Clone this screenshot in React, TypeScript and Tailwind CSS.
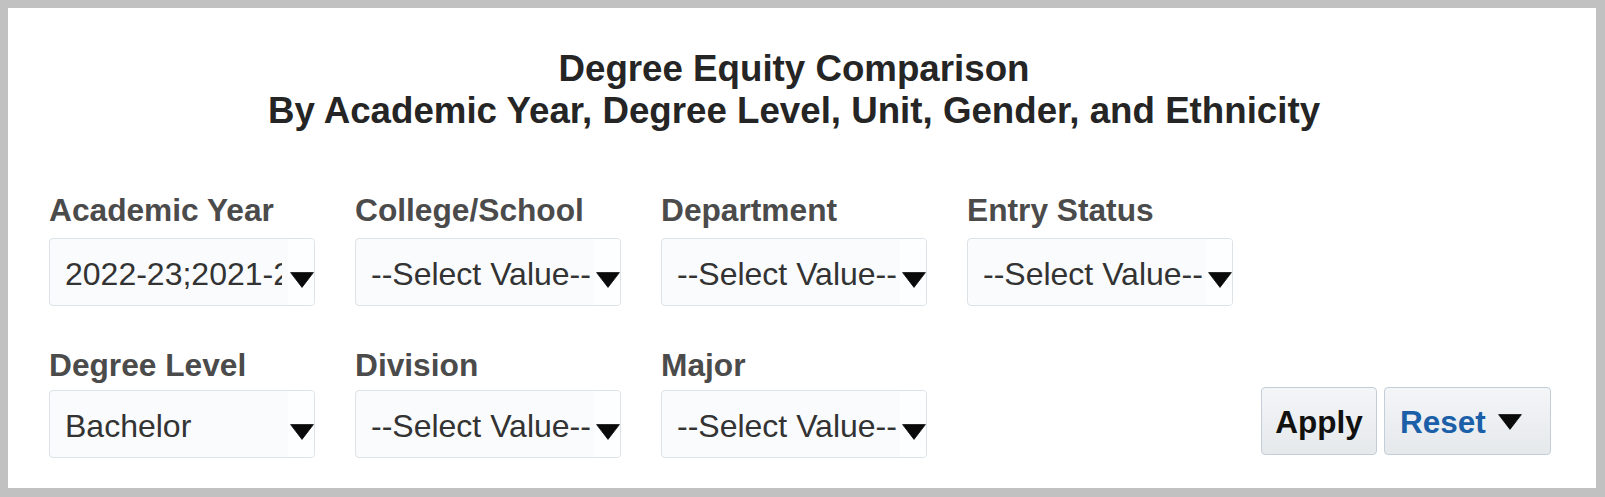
import React from 'react';

const font = { fontFamily: '"Liberation Sans", Arial, sans-serif' };

interface SelectFieldProps {
  label: string;
  value: string;
  labelGap?: string;
  clip?: string;
}

const DownArrow = ({ className }: { className?: string }) => (
  <svg width="24" height="16" viewBox="0 0 24 16" className={className}>
    <polygon points="0.6,0.6 23.4,0.6 12,15.4" fill="#0a0a0a" stroke="#0a0a0a" strokeWidth="0.8" strokeLinejoin="round" />
  </svg>
);

const SelectField = ({ label, value, labelGap = 'mt-[7px]', clip = 'w-[223px]' }: SelectFieldProps) => {
  return (
    <div className="flex w-[266px] flex-col">
      <div className="text-[31.7px] font-bold leading-[36px] whitespace-nowrap text-[#4b4b4b]">{label}</div>
      <div className={`${labelGap} flex h-[68px] items-center overflow-hidden rounded-[4px] border border-[#dce2e6] bg-[#f9fbfd]`}>
        <span className={`${clip} ml-[15px] shrink-0 overflow-hidden pt-[4px] text-[32px] leading-[36px] whitespace-nowrap text-[#333333]`}>
          {value}
        </span>
        <div className="ml-auto flex w-[26px] shrink-0 self-stretch items-end justify-end bg-[#fdfeff] pb-[17px]">
          <DownArrow />
        </div>
      </div>
    </div>
  );
};

export default function App() {
  return (
    <div
      className="h-[497px] w-[1605px] bg-[#c1c1c1] pt-[8px] pl-[8px] pr-[9px] pb-[9px]"
      style={font}
    >
      <div className="h-full bg-white pt-[40px] pl-[41px] pr-[45px]">
        {/* Title */}
        <div className="pr-[12px] text-center text-[36.7px] font-bold leading-[42px] text-[#252525]">
          <div>Degree Equity Comparison</div>
          <div>By Academic Year, Degree Level, Unit, Gender, and Ethnicity</div>
        </div>

        {/* Prompts row 1 */}
        <div className="mt-[60px] flex gap-[40px]">
          <SelectField label="Academic Year" value="2022-23;2021-22;2020-21" labelGap="mt-[10px]" clip="w-[217px]" />
          <SelectField label="College/School" value="--Select Value--" labelGap="mt-[10px]" />
          <SelectField label="Department" value="--Select Value--" labelGap="mt-[10px]" />
          <SelectField label="Entry Status" value="--Select Value--" labelGap="mt-[10px]" />
        </div>

        {/* Prompts row 2 + buttons */}
        <div className="mt-[41px] flex items-end gap-[40px]">
          <SelectField label="Degree Level" value="Bachelor" />
          <SelectField label="Division" value="--Select Value--" />
          <SelectField label="Major" value="--Select Value--" />
          <div className="ml-auto mb-[3px] flex gap-[7px]">
            <button className="flex h-[68px] w-[116px] items-center justify-center rounded-[4px] border border-[#c3ced8] bg-gradient-to-b from-[#f3f5f7] to-[#e6e9ec] pt-[4px] text-[31.5px] font-bold text-[#111111]">
              Apply
            </button>
            <button className="flex h-[68px] w-[167px] items-center rounded-[4px] border border-[#c3ced8] bg-gradient-to-b from-[#f3f5f7] to-[#e6e9ec] pt-[4px] pl-[15px] text-[31.5px] font-bold text-[#1b5fa8]">
              Reset
              <DownArrow className="ml-[12px] mb-[2px]" />
            </button>
          </div>
        </div>
      </div>
    </div>
  );
}
